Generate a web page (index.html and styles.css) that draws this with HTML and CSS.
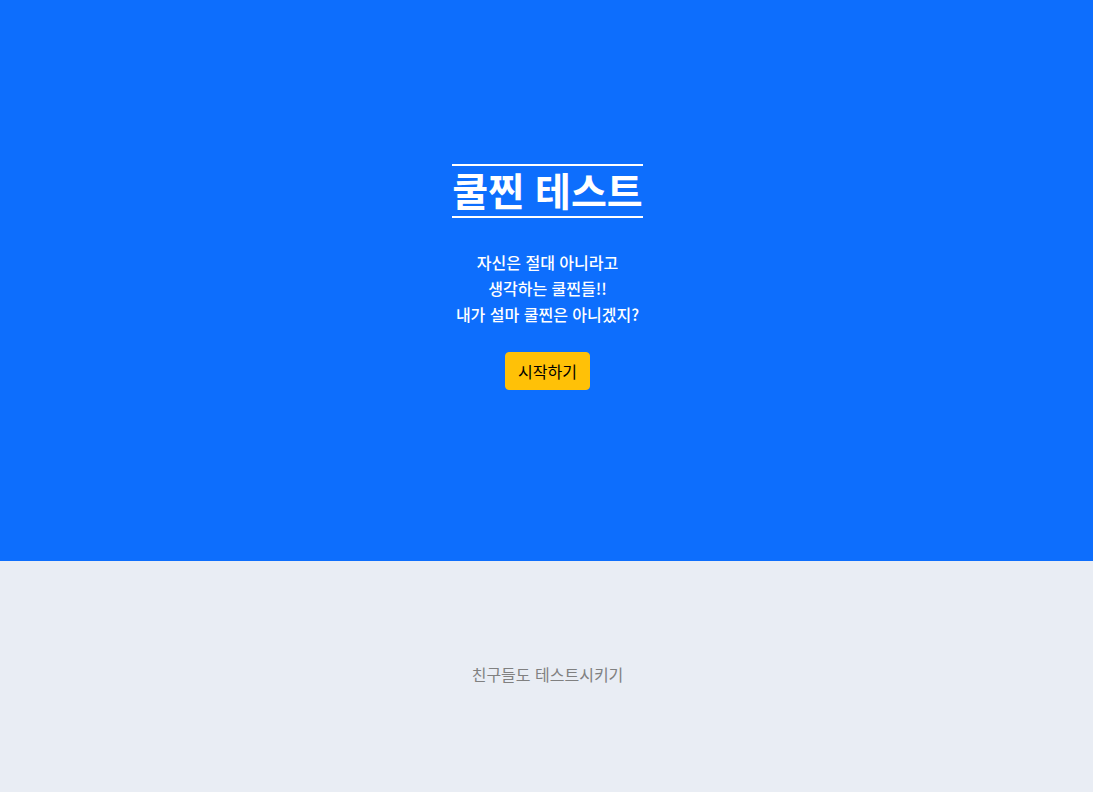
FILE: index.html
```html
<!DOCTYPE html>
<html lang="ko">
<head>
<meta charset="utf-8">
<meta name="viewport" content="width=device-width, initial-scale=1">
<title>쿨찐 테스트</title>
<link rel="stylesheet" href="styles.css">
</head>
<body>
<main class="hero">
<h1 class="title">쿨찐 테스트</h1>
<p class="intro">자신은 절대 아니라고<br>생각하는 쿨찐들!!<br>내가 설마 쿨찐은 아니겠지?</p>
<button class="start" type="button">시작하기</button>
</main>
<footer class="share">
<p class="share-text">친구들도 테스트시키기</p>
</footer>
</body>
</html>
```

FILE: styles.css
```css
* {
  box-sizing: border-box;
}

body {
  margin: 0;
  min-height: 100vh;
  display: flex;
  flex-direction: column;
  background: #e9edf4;
  font-family: "Noto Sans CJK KR", "Noto Sans", sans-serif;
  font-size: 16px;
  line-height: 26px;
}

.hero {
  display: flex;
  flex-direction: column;
  align-items: center;
  padding: 164px 16px 171px 18px;
  background: #0d6efd;
  color: #fff;
  text-align: center;
}

.title {
  margin: 0 0 31px;
  padding-bottom: 4px;
  border-top: 2px solid #fff;
  border-bottom: 2px solid #fff;
  font-size: 39px;
  font-weight: 700;
  line-height: 46px;
}

.intro {
  margin: 0 0 25px;
  font-weight: 500;
}

.start {
  padding: 6px 12px;
  border: 1px solid #ffc107;
  border-radius: 4px;
  background: #ffc107;
  color: #000;
  font: inherit;
  line-height: 24px;
  cursor: pointer;
}

.share {
  padding: 100px 16px 80px 18px;
  color: #808080;
  text-align: center;
}

.share-text {
  margin: 0;
}
```
